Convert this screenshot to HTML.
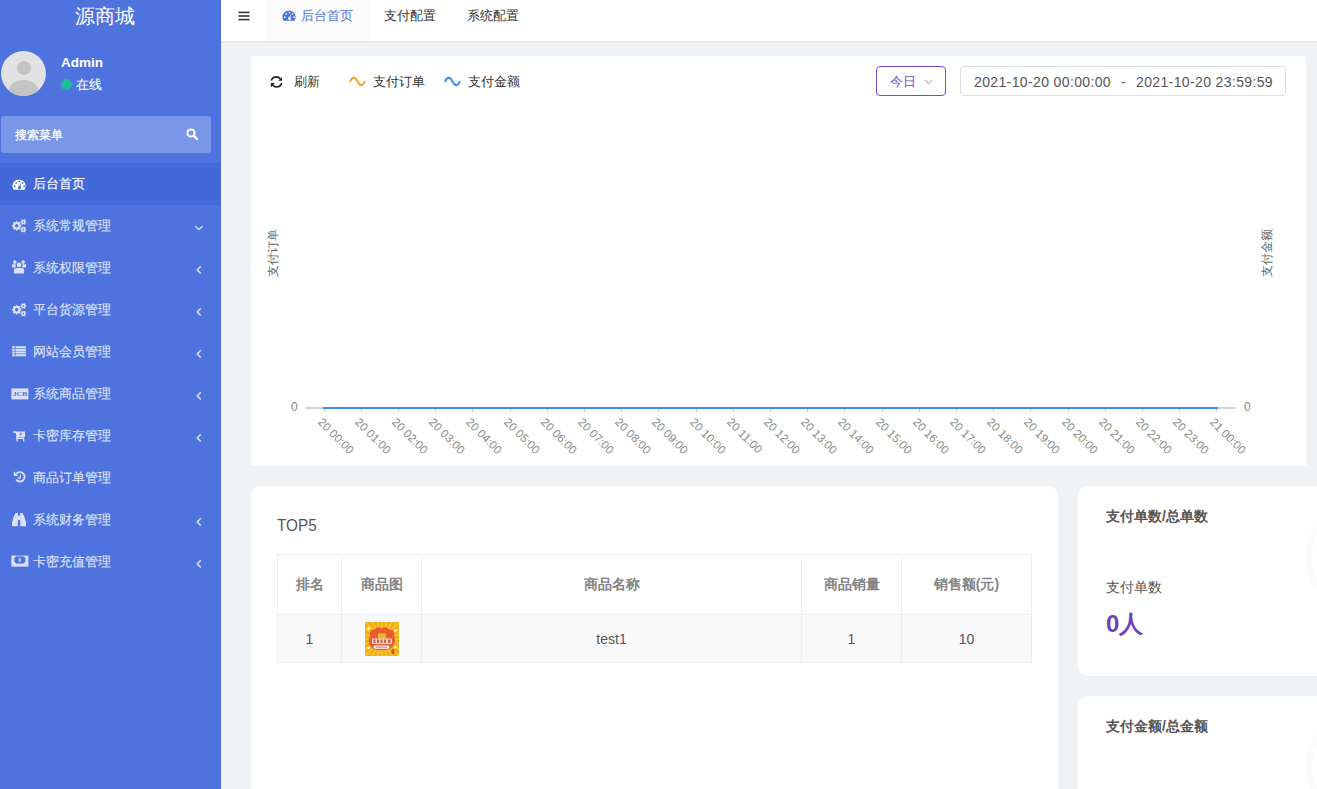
<!DOCTYPE html>
<html><head><meta charset="utf-8">
<style>
*{box-sizing:border-box;margin:0;padding:0}
html,body{width:1317px;height:789px;overflow:hidden;background:#eff3f6;font-family:"Liberation Sans",sans-serif;position:relative}
#side{position:absolute;left:0;top:0;width:221px;height:789px;background:#4e73df}
#logo{position:absolute;left:75px;top:2px;font-size:20px;color:#fff;line-height:28px}
#avatar{position:absolute;left:1px;top:51px;width:45px;height:45px;border-radius:50%;background:#e2e2e2;overflow:hidden}
#avatar .h{position:absolute;left:16px;top:10px;width:14px;height:14px;border-radius:50%;background:#c4c4c4}
#avatar .b{position:absolute;left:8px;top:29px;width:29px;height:20px;border-radius:50%;background:#c4c4c4}
#uname{position:absolute;left:61px;top:55px;font-size:13.5px;font-weight:bold;color:#fff;line-height:16px}
#dot{position:absolute;left:61px;top:79px;width:11px;height:11px;border-radius:50%;background:#1abc9c}
#online{position:absolute;left:76px;top:76px;font-size:13px;color:#fff;line-height:18px}
#search{position:absolute;left:1px;top:116px;width:210px;height:37px;border-radius:3px;background:rgba(255,255,255,0.25)}
#search span{position:absolute;left:14px;top:11px;font-size:12px;color:#fff;line-height:16px}
#search svg{position:absolute;left:185px;top:12px}
.menu{position:absolute;left:0;width:221px;height:42px;color:#dee4f9;font-size:13px}
.menu.active{background:#4369d9;color:#fff}
.menu svg.ic{position:absolute;left:10px;top:13px}
.menu .tx{position:absolute;left:33px;top:12px;line-height:18px}
.menu svg.ch{position:absolute;left:194px;top:17px}
#header{position:absolute;left:221px;top:0;width:1096px;height:41px;background:#fff;box-shadow:0 1px 2px rgba(0,0,0,0.07)}
#hamb{position:absolute;left:17px;top:11px}
.tab{position:absolute;top:0;height:41px;font-size:13px;color:#333;line-height:31px;white-space:nowrap}
.tab.active{background:#fafafa;color:#4e73df}
.panel{position:absolute;background:#fff}
.t13{font-size:13px;color:#333;position:absolute;line-height:18px;white-space:nowrap}
#btnToday{position:absolute;left:876px;top:66px;width:70px;height:30px;border:1px solid #7b45d4;border-radius:4px}
#btnToday span{position:absolute;left:13px;top:6px;font-size:13px;color:#7b45d4;line-height:18px}
#btnToday svg{position:absolute;left:47px;top:12px}
#dateBox{position:absolute;left:960px;top:66px;width:326px;height:30px;border:1px solid #dcdfe6;border-radius:3px}
#dateBox span{position:absolute;top:6px;font-size:14px;color:#555;line-height:18px;letter-spacing:0.37px;white-space:nowrap}
.xl{position:absolute;top:413px;font-size:11.6px;color:#8a8a8a;line-height:14px;white-space:nowrap;transform-origin:0 50%;transform:rotate(45deg)}
.tk{position:absolute;top:409px;width:1px;height:3px;background:#ccc}
.yt{position:absolute;font-size:12px;color:#666;line-height:14px;white-space:nowrap;transform-origin:0 0;transform:rotate(-90deg)}
table{position:absolute;left:277px;top:554px;border-collapse:collapse;table-layout:fixed}
td,th{border:1px solid #ebeef5;text-align:center;font-size:14px;color:#606266;white-space:nowrap}
th{height:60px;font-weight:bold;color:#848484}
td{height:48px;background:#f9f9fa;color:#555}
.st{position:absolute;white-space:nowrap}
#side .tx,#online{-webkit-text-stroke:0.12px currentColor}#search span{-webkit-text-stroke:0.25px currentColor}

</style></head><body>
<div id="side">
  <div id="logo">源商城</div>
  <div id="avatar"><div class="h"></div><div class="b"></div></div>
  <div id="uname">Admin</div>
  <div id="dot"></div>
  <div id="online">在线</div>
  <div id="search"><span>搜索菜单</span>
    <svg width="12" height="12" viewBox="0 0 12 12"><circle cx="5" cy="5" r="3.6" fill="none" stroke="#fff" stroke-width="2"/><line x1="7.6" y1="7.6" x2="10.8" y2="10.8" stroke="#fff" stroke-width="2.4" stroke-linecap="round"/></svg>
  </div>
  <div class="menu active" style="top:163px"><svg class="ic" style="left:11.6px;top:15.6px" width="14" height="11" viewBox="0 0 14 11"><path d="M1.50,10.65 A6.6,6.6 0 1 1 12.50,10.65 Z" fill="#ffffff"/><circle cx="7.40" cy="2.55" r="0.85" fill="#4369d9"/><circle cx="4.20" cy="3.95" r="0.85" fill="#4369d9"/><circle cx="10.60" cy="3.95" r="0.85" fill="#4369d9"/><circle cx="2.80" cy="7.15" r="0.85" fill="#4369d9"/><circle cx="12.10" cy="7.15" r="0.85" fill="#4369d9"/><circle cx="7.40" cy="8.70" r="1.45" fill="#4369d9"/><path d="M6.50,8.40 L9.00,3.80 L8.30,8.90 Z" fill="#4369d9"/></svg><span class="tx">后台首页</span></div>
<div class="menu" style="top:205px"><svg class="ic" style="left:12px;top:13.5px" width="14" height="14" viewBox="0 0 14 14"><circle cx="4.70" cy="6.80" r="3.70" fill="#dae1f9"/><path d="M8.27,5.81 L9.33,5.99 L9.33,7.61 L8.27,7.79 L7.92,8.62 L8.55,9.50 L7.40,10.65 L6.52,10.02 L5.69,10.37 L5.51,11.43 L3.89,11.43 L3.71,10.37 L2.88,10.02 L2.00,10.65 L0.85,9.50 L1.48,8.62 L1.13,7.79 L0.07,7.61 L0.07,5.99 L1.13,5.81 L1.48,4.98 L0.85,4.10 L2.00,2.95 L2.88,3.58 L3.71,3.23 L3.89,2.17 L5.51,2.17 L5.69,3.23 L6.52,3.58 L7.40,2.95 L8.55,4.10 L7.92,4.98 Z" fill="#dae1f9"/><circle cx="4.70" cy="6.80" r="1.70" fill="#4e73df"/><circle cx="11.45" cy="3.00" r="2.15" fill="#dae1f9"/><path d="M13.46,2.24 L14.37,2.31 L14.37,3.69 L13.46,3.76 L13.11,4.36 L13.50,5.19 L12.32,5.87 L11.80,5.12 L11.10,5.12 L10.58,5.87 L9.40,5.19 L9.79,4.36 L9.44,3.76 L8.53,3.69 L8.53,2.31 L9.44,2.24 L9.79,1.64 L9.40,0.81 L10.58,0.13 L11.10,0.88 L11.80,0.88 L12.32,0.13 L13.50,0.81 L13.11,1.64 Z" fill="#dae1f9"/><circle cx="11.45" cy="3.00" r="0.85" fill="#4e73df"/><circle cx="11.45" cy="10.60" r="2.15" fill="#dae1f9"/><path d="M13.46,9.84 L14.37,9.91 L14.37,11.29 L13.46,11.36 L13.11,11.96 L13.50,12.79 L12.32,13.47 L11.80,12.72 L11.10,12.72 L10.58,13.47 L9.40,12.79 L9.79,11.96 L9.44,11.36 L8.53,11.29 L8.53,9.91 L9.44,9.84 L9.79,9.24 L9.40,8.41 L10.58,7.73 L11.10,8.48 L11.80,8.48 L12.32,7.73 L13.50,8.41 L13.11,9.24 Z" fill="#dae1f9"/><circle cx="11.45" cy="10.60" r="0.85" fill="#4e73df"/></svg><span class="tx">系统常规管理</span><svg class="ch" style="left:194px;top:20px" width="10" height="7" viewBox="0 0 10 7"><path d="M1,1 L4.9,4.6 L8.8,1" fill="none" stroke="#dae1f9" stroke-width="1.3"/></svg></div>
<div class="menu" style="top:247px"><svg class="ic" style="left:12px;top:13.0px" width="14" height="14" viewBox="0 0 14 14"><circle cx="7" cy="4.9" r="2.35" fill="#dae1f9"/><circle cx="2.8" cy="2.1" r="1.8" fill="#dae1f9"/><circle cx="11.2" cy="2.1" r="1.8" fill="#dae1f9"/><rect x="0" y="4.2" width="3.7" height="3.3" rx="0.6" fill="#dae1f9"/><rect x="10.3" y="4.2" width="3.7" height="3.3" rx="0.6" fill="#dae1f9"/><path d="M1.9,13.4 L1.9,10 Q1.9,7.9 4,7.9 L10,7.9 Q12.1,7.9 12.1,10 L12.1,13.4 Z" fill="#dae1f9"/></svg><span class="tx">系统权限管理</span><svg class="ch" style="left:195px;top:18px" width="8" height="10" viewBox="0 0 8 10"><path d="M5.8,1.2 L2.2,4.9 L5.8,8.5" fill="none" stroke="#dae1f9" stroke-width="1.5"/></svg></div>
<div class="menu" style="top:289px"><svg class="ic" style="left:12px;top:13.5px" width="14" height="14" viewBox="0 0 14 14"><circle cx="4.70" cy="6.80" r="3.70" fill="#dae1f9"/><path d="M8.27,5.81 L9.33,5.99 L9.33,7.61 L8.27,7.79 L7.92,8.62 L8.55,9.50 L7.40,10.65 L6.52,10.02 L5.69,10.37 L5.51,11.43 L3.89,11.43 L3.71,10.37 L2.88,10.02 L2.00,10.65 L0.85,9.50 L1.48,8.62 L1.13,7.79 L0.07,7.61 L0.07,5.99 L1.13,5.81 L1.48,4.98 L0.85,4.10 L2.00,2.95 L2.88,3.58 L3.71,3.23 L3.89,2.17 L5.51,2.17 L5.69,3.23 L6.52,3.58 L7.40,2.95 L8.55,4.10 L7.92,4.98 Z" fill="#dae1f9"/><circle cx="4.70" cy="6.80" r="1.70" fill="#4e73df"/><circle cx="11.45" cy="3.00" r="2.15" fill="#dae1f9"/><path d="M13.46,2.24 L14.37,2.31 L14.37,3.69 L13.46,3.76 L13.11,4.36 L13.50,5.19 L12.32,5.87 L11.80,5.12 L11.10,5.12 L10.58,5.87 L9.40,5.19 L9.79,4.36 L9.44,3.76 L8.53,3.69 L8.53,2.31 L9.44,2.24 L9.79,1.64 L9.40,0.81 L10.58,0.13 L11.10,0.88 L11.80,0.88 L12.32,0.13 L13.50,0.81 L13.11,1.64 Z" fill="#dae1f9"/><circle cx="11.45" cy="3.00" r="0.85" fill="#4e73df"/><circle cx="11.45" cy="10.60" r="2.15" fill="#dae1f9"/><path d="M13.46,9.84 L14.37,9.91 L14.37,11.29 L13.46,11.36 L13.11,11.96 L13.50,12.79 L12.32,13.47 L11.80,12.72 L11.10,12.72 L10.58,13.47 L9.40,12.79 L9.79,11.96 L9.44,11.36 L8.53,11.29 L8.53,9.91 L9.44,9.84 L9.79,9.24 L9.40,8.41 L10.58,7.73 L11.10,8.48 L11.80,8.48 L12.32,7.73 L13.50,8.41 L13.11,9.24 Z" fill="#dae1f9"/><circle cx="11.45" cy="10.60" r="0.85" fill="#4e73df"/></svg><span class="tx">平台货源管理</span><svg class="ch" style="left:195px;top:18px" width="8" height="10" viewBox="0 0 8 10"><path d="M5.8,1.2 L2.2,4.9 L5.8,8.5" fill="none" stroke="#dae1f9" stroke-width="1.5"/></svg></div>
<div class="menu" style="top:331px"><svg class="ic" style="left:12px;top:14.5px" width="14" height="11" viewBox="0 0 14 11"><rect x="0.2" y="0.20" width="2.5" height="2.05" fill="#dae1f9"/><rect x="3.5" y="0.20" width="10.35" height="2.05" fill="#dae1f9"/><rect x="0.2" y="2.85" width="2.5" height="2.05" fill="#dae1f9"/><rect x="3.5" y="2.85" width="10.35" height="2.05" fill="#dae1f9"/><rect x="0.2" y="5.45" width="2.5" height="2.05" fill="#dae1f9"/><rect x="3.5" y="5.45" width="10.35" height="2.05" fill="#dae1f9"/><rect x="0.2" y="8.20" width="2.5" height="2.05" fill="#dae1f9"/><rect x="3.5" y="8.20" width="10.35" height="2.05" fill="#dae1f9"/></svg><span class="tx">网站会员管理</span><svg class="ch" style="left:195px;top:18px" width="8" height="10" viewBox="0 0 8 10"><path d="M5.8,1.2 L2.2,4.9 L5.8,8.5" fill="none" stroke="#dae1f9" stroke-width="1.5"/></svg></div>
<div class="menu" style="top:373px"><svg class="ic" style="left:10.5px;top:14.5px" width="18" height="12" viewBox="0 0 18 12"><rect x="0.4" y="0.4" width="17" height="11" fill="#dae1f9"/><text x="1.7" y="8" font-family="Liberation Serif" font-size="5.2" font-weight="bold" textLength="14.6" lengthAdjust="spacingAndGlyphs" fill="#4e73df">JCB</text></svg><span class="tx">系统商品管理</span><svg class="ch" style="left:195px;top:18px" width="8" height="10" viewBox="0 0 8 10"><path d="M5.8,1.2 L2.2,4.9 L5.8,8.5" fill="none" stroke="#dae1f9" stroke-width="1.5"/></svg></div>
<div class="menu" style="top:415px"><svg class="ic" style="left:13px;top:14.5px" width="14" height="12" viewBox="0 0 14 12"><path d="M0,2 L2.6,2 L3.9,4" fill="none" stroke="#dae1f9" stroke-width="1.5" stroke-linecap="round"/><path d="M3.4,1.5 L12,1.5 L12,6.9 L3.4,6.9 Z" fill="#dae1f9"/><rect x="3.4" y="7.4" width="7.9" height="1.6" fill="#dae1f9"/><rect x="3.4" y="6" width="1.4" height="5.4" fill="#dae1f9"/><rect x="10" y="9" width="1.3" height="2.4" fill="#dae1f9"/><path d="M7.8,2.6 L7.8,4.6 M6.3,3.6 L7.8,5.2 L9.3,3.6" fill="none" stroke="#4e73df" stroke-width="0.9"/></svg><span class="tx">卡密库存管理</span><svg class="ch" style="left:195px;top:18px" width="8" height="10" viewBox="0 0 8 10"><path d="M5.8,1.2 L2.2,4.9 L5.8,8.5" fill="none" stroke="#dae1f9" stroke-width="1.5"/></svg></div>
<div class="menu" style="top:457px"><svg class="ic" style="left:12.5px;top:14.4px" width="14" height="12" viewBox="0 0 14 12"><path d="M3.30,2.78 A4.70,4.70 0 1 1 3.05,8.50" fill="none" stroke="#dae1f9" stroke-width="1.9"/><path d="M0.7,0.2 L0.7,4.9 L5.2,4.9 Z" fill="#dae1f9"/><path d="M7.3,3.6 L7.3,7.1 L4.9,7.1" fill="none" stroke="#dae1f9" stroke-width="1.2"/></svg><span class="tx">商品订单管理</span></div>
<div class="menu" style="top:499px"><svg class="ic" style="left:12px;top:13.5px" width="14" height="14" viewBox="0 0 14 14"><path d="M3.1,0 L5.9,0 L5.9,2.1 L5.7,13.3 L0,13.3 L0,9.5 L2.2,2.1 L3.1,2.1 Z" fill="#dae1f9"/><path d="M10.9,0 L8.1,0 L8.1,2.1 L8.3,13.3 L14,13.3 L14,9.5 L11.8,2.1 L10.9,2.1 Z" fill="#dae1f9"/><rect x="5.5" y="2.6" width="3" height="4.6" fill="#dae1f9"/></svg><span class="tx">系统财务管理</span><svg class="ch" style="left:195px;top:18px" width="8" height="10" viewBox="0 0 8 10"><path d="M5.8,1.2 L2.2,4.9 L5.8,8.5" fill="none" stroke="#dae1f9" stroke-width="1.5"/></svg></div>
<div class="menu" style="top:541px"><svg class="ic" style="left:10.5px;top:14.3px" width="18" height="12" viewBox="0 0 18 12"><defs><clipPath id="mcc"><circle cx="6.9" cy="5.1" r="3.05"/></clipPath></defs><rect x="0.4" y="0.6" width="17" height="11" fill="#dae1f9"/><circle cx="6.9" cy="5.1" r="3.75" fill="#4e73df"/><circle cx="10.75" cy="5.1" r="3.75" fill="#4e73df"/><g clip-path="url(#mcc)"><circle cx="10.75" cy="5.1" r="3.05" fill="#dae1f9" opacity="0.85"/></g></svg><span class="tx">卡密充值管理</span><svg class="ch" style="left:195px;top:18px" width="8" height="10" viewBox="0 0 8 10"><path d="M5.8,1.2 L2.2,4.9 L5.8,8.5" fill="none" stroke="#dae1f9" stroke-width="1.5"/></svg></div>

</div>
<div id="header">
  <svg id="hamb" width="12" height="10" viewBox="0 0 12 10"><rect x="0.5" y="0.6" width="11" height="1.6" fill="#333"/><rect x="0.5" y="4.2" width="11" height="1.6" fill="#333"/><rect x="0.5" y="7.8" width="11" height="1.6" fill="#333"/></svg>
  <div class="tab active" style="left:45px;width:103px"><svg style="position:absolute;left:16px;top:10px" width="14" height="11" viewBox="0 0 14 11"><path d="M1.50,10.65 A6.6,6.6 0 1 1 12.50,10.65 Z" fill="#4e73df"/><circle cx="7.40" cy="2.55" r="0.85" fill="#fafafa"/><circle cx="4.20" cy="3.95" r="0.85" fill="#fafafa"/><circle cx="10.60" cy="3.95" r="0.85" fill="#fafafa"/><circle cx="2.80" cy="7.15" r="0.85" fill="#fafafa"/><circle cx="12.10" cy="7.15" r="0.85" fill="#fafafa"/><circle cx="7.40" cy="8.70" r="1.45" fill="#fafafa"/><path d="M6.50,8.40 L9.00,3.80 L8.30,8.90 Z" fill="#fafafa"/></svg><span style="position:absolute;left:35px;top:0">后台首页</span></div>
  <div class="tab" style="left:163px">支付配置</div>
  <div class="tab" style="left:246px">系统配置</div>
</div>
<div class="panel" id="chart" style="left:251px;top:56px;width:1055px;height:410px;border-radius:3px"></div>
<!-- chart toolbar -->
<svg style="position:absolute;left:270px;top:75.6px" width="13" height="13" viewBox="0 0 13 13"><path d="M1.3,4.6 C2.2,1.8 4.2,0.9 6.4,0.9 C8.2,0.9 9.4,1.7 10.3,2.9" fill="none" stroke="#222" stroke-width="1.7"/><path d="M12,0.9 L12,4.8 L8.3,4.8 Z" fill="#222"/><path d="M11.7,6.9 C10.8,9.9 8.8,10.9 6.6,10.9 C4.8,10.9 3.6,10.1 2.7,8.9" fill="none" stroke="#222" stroke-width="1.7"/><path d="M0.9,11.4 L0.9,6.9 L4.8,6.9 Z" fill="#222"/></svg>
<span class="t13" style="left:294px;top:73px">刷新</span>
<svg style="position:absolute;left:349px;top:76px" width="17" height="11" viewBox="0 0 17 11"><path d="M1,6 C3,0.5 6,0.5 8.5,5.5 C11,10.5 14,10.5 16,5" fill="none" stroke="#f5a623" stroke-width="2"/></svg>
<span class="t13" style="left:373px;top:73px">支付订单</span>
<svg style="position:absolute;left:444px;top:76px" width="17" height="11" viewBox="0 0 17 11"><path d="M1,6 C3,0.5 6,0.5 8.5,5.5 C11,10.5 14,10.5 16,5" fill="none" stroke="#3f8ef0" stroke-width="2"/></svg>
<span class="t13" style="left:468px;top:73px">支付金额</span>
<div id="btnToday"><span>今日</span><svg width="9" height="6" viewBox="0 0 9 6"><path d="M0.8,0.8 L4.5,4.6 L8.2,0.8" fill="none" stroke="#999" stroke-width="1"/></svg></div>
<div id="dateBox"><span style="left:13px">2021-10-20 00:00:00</span><span style="left:160px">-</span><span style="left:175px">2021-10-20 23:59:59</span></div>
<!-- chart axes -->
<span class="yt" style="left:266px;top:277px">支付订单</span>
<span class="yt" style="left:1260px;top:277px">支付金额</span>
<span class="st" style="left:291px;top:400px;font-size:12px;color:#888;line-height:14px">0</span>
<span class="st" style="left:1244px;top:400px;font-size:12px;color:#888;line-height:14px">0</span>
<div style="position:absolute;left:305px;top:407px;width:931px;height:2px;background:#d4d4d4"></div>
<div style="position:absolute;left:323px;top:407px;width:895px;height:2px;background:#3b8ff3"></div>
<i class="tk" style="left:324px"></i><i class="tk" style="left:361px"></i><i class="tk" style="left:398px"></i><i class="tk" style="left:435px"></i><i class="tk" style="left:472px"></i><i class="tk" style="left:510px"></i><i class="tk" style="left:547px"></i><i class="tk" style="left:584px"></i><i class="tk" style="left:621px"></i><i class="tk" style="left:658px"></i><i class="tk" style="left:696px"></i><i class="tk" style="left:733px"></i><i class="tk" style="left:770px"></i><i class="tk" style="left:807px"></i><i class="tk" style="left:844px"></i><i class="tk" style="left:882px"></i><i class="tk" style="left:919px"></i><i class="tk" style="left:956px"></i><i class="tk" style="left:993px"></i><i class="tk" style="left:1030px"></i><i class="tk" style="left:1068px"></i><i class="tk" style="left:1105px"></i><i class="tk" style="left:1142px"></i><i class="tk" style="left:1179px"></i><i class="tk" style="left:1216px"></i>
<span class="xl" style="left:319.5px">20 00:00</span><span class="xl" style="left:356.7px">20 01:00</span><span class="xl" style="left:393.9px">20 02:00</span><span class="xl" style="left:431.1px">20 03:00</span><span class="xl" style="left:468.3px">20 04:00</span><span class="xl" style="left:505.5px">20 05:00</span><span class="xl" style="left:542.7px">20 06:00</span><span class="xl" style="left:579.9px">20 07:00</span><span class="xl" style="left:617.1px">20 08:00</span><span class="xl" style="left:654.3px">20 09:00</span><span class="xl" style="left:691.5px">20 10:00</span><span class="xl" style="left:728.7px">20 11:00</span><span class="xl" style="left:765.9px">20 12:00</span><span class="xl" style="left:803.1px">20 13:00</span><span class="xl" style="left:840.3px">20 14:00</span><span class="xl" style="left:877.5px">20 15:00</span><span class="xl" style="left:914.7px">20 16:00</span><span class="xl" style="left:951.9px">20 17:00</span><span class="xl" style="left:989.1px">20 18:00</span><span class="xl" style="left:1026.3px">20 19:00</span><span class="xl" style="left:1063.5px">20 20:00</span><span class="xl" style="left:1100.7px">20 21:00</span><span class="xl" style="left:1137.9px">20 22:00</span><span class="xl" style="left:1175.1px">20 23:00</span><span class="xl" style="left:1212.3px">21 00:00</span>
<div class="panel" id="top5" style="left:251px;top:486px;width:807px;height:320px;border-radius:10px"></div>
<span class="st" style="left:277px;top:515px;font-size:17px;color:#555;line-height:22px;transform:scaleX(0.9);transform-origin:0 0">TOP5</span>
<table>
<colgroup><col style="width:64px"><col style="width:80px"><col style="width:380px"><col style="width:100px"><col style="width:130px"></colgroup>
<tr><th>排名</th><th>商品图</th><th>商品名称</th><th>商品销量</th><th>销售额(元)</th></tr>
<tr><td>1</td><td></td><td>test1</td><td>1</td><td>10</td></tr>
</table>
<svg style="position:absolute;left:365px;top:622px" width="34" height="34" viewBox="0 0 34 34"><rect width="34" height="34" fill="#f4ae17"/><g stroke="#f9cb36" stroke-width="1.4" opacity="0.9"><line x1="17" y1="17" x2="57.0" y2="17.0"/><line x1="17" y1="17" x2="55.6" y2="27.4"/><line x1="17" y1="17" x2="51.6" y2="37.0"/><line x1="17" y1="17" x2="45.3" y2="45.3"/><line x1="17" y1="17" x2="37.0" y2="51.6"/><line x1="17" y1="17" x2="27.4" y2="55.6"/><line x1="17" y1="17" x2="17.0" y2="57.0"/><line x1="17" y1="17" x2="6.6" y2="55.6"/><line x1="17" y1="17" x2="-3.0" y2="51.6"/><line x1="17" y1="17" x2="-11.3" y2="45.3"/><line x1="17" y1="17" x2="-17.6" y2="37.0"/><line x1="17" y1="17" x2="-21.6" y2="27.4"/><line x1="17" y1="17" x2="-23.0" y2="17.0"/><line x1="17" y1="17" x2="-21.6" y2="6.6"/><line x1="17" y1="17" x2="-17.6" y2="-3.0"/><line x1="17" y1="17" x2="-11.3" y2="-11.3"/><line x1="17" y1="17" x2="-3.0" y2="-17.6"/><line x1="17" y1="17" x2="6.6" y2="-21.6"/><line x1="17" y1="17" x2="17.0" y2="-23.0"/><line x1="17" y1="17" x2="27.4" y2="-21.6"/><line x1="17" y1="17" x2="37.0" y2="-17.6"/><line x1="17" y1="17" x2="45.3" y2="-11.3"/><line x1="17" y1="17" x2="51.6" y2="-3.0"/><line x1="17" y1="17" x2="55.6" y2="6.6"/></g><path d="M5,14 C4,9 7,7 9.5,8 C10.5,5 14,4.5 16.5,6.5 C19,4.5 23,5 24,8 C27,7 30,9 29,14 C31,18 30,23 27,25 C25,28 20,28.5 17,28 C13,28.5 8,28 6.5,25 C3.5,23 3,18 5,14 Z" fill="#e95c2b"/><rect x="13" y="11.5" width="8" height="5" fill="#e8b834"/><rect x="7" y="16.5" width="20" height="5.5" fill="#f1d8cf"/><g fill="#c9604a"><rect x="8.5" y="17.5" width="2" height="3.5"/><rect x="12" y="17.5" width="2" height="3.5"/><rect x="15.5" y="17.5" width="2" height="3.5"/><rect x="19" y="17.5" width="2" height="3.5"/><rect x="23" y="17.5" width="2.5" height="3.5"/></g><rect x="8.5" y="23.5" width="16" height="3.2" rx="1.6" fill="#fff"/><rect x="10.5" y="24.4" width="12" height="1.4" fill="#b0a0a0"/><circle cx="3.5" cy="6.5" r="1.3" fill="#fff6d8"/><circle cx="30.5" cy="8.5" r="1.3" fill="#fff6d8"/><circle cx="3.5" cy="26" r="1.3" fill="#fff6d8"/><circle cx="30.5" cy="25" r="1.3" fill="#fff6d8"/><rect x="26.5" y="27" width="3" height="5" fill="#d2542a"/></svg>
<div class="panel" id="stat1" style="left:1078px;top:486px;width:260px;height:190px;border-radius:10px"></div>
<span class="st" style="left:1106px;top:507px;font-size:14px;font-weight:bold;color:#555;line-height:18px">支付单数/总单数</span>
<span class="st" style="left:1106px;top:578px;font-size:14px;color:#555;line-height:18px">支付单数</span>
<span class="st" style="left:1106px;top:609px;font-size:24px;font-weight:bold;color:#6f42c1;line-height:30px">0人</span>
<svg style="position:absolute;left:1290px;top:486px" width="27" height="190" viewBox="0 0 27 190"><circle cx="77" cy="71" r="58" fill="none" stroke="#fbfbfb" stroke-width="6"/></svg>
<div class="panel" id="stat2" style="left:1078px;top:696px;width:260px;height:200px;border-radius:10px"></div>
<svg style="position:absolute;left:1290px;top:696px" width="27" height="93" viewBox="0 0 27 93"><circle cx="77" cy="71" r="58" fill="none" stroke="#fbfbfb" stroke-width="6"/></svg>
<span class="st" style="left:1106px;top:717px;font-size:14px;font-weight:bold;color:#555;line-height:18px">支付金额/总金额</span>

</body></html>
